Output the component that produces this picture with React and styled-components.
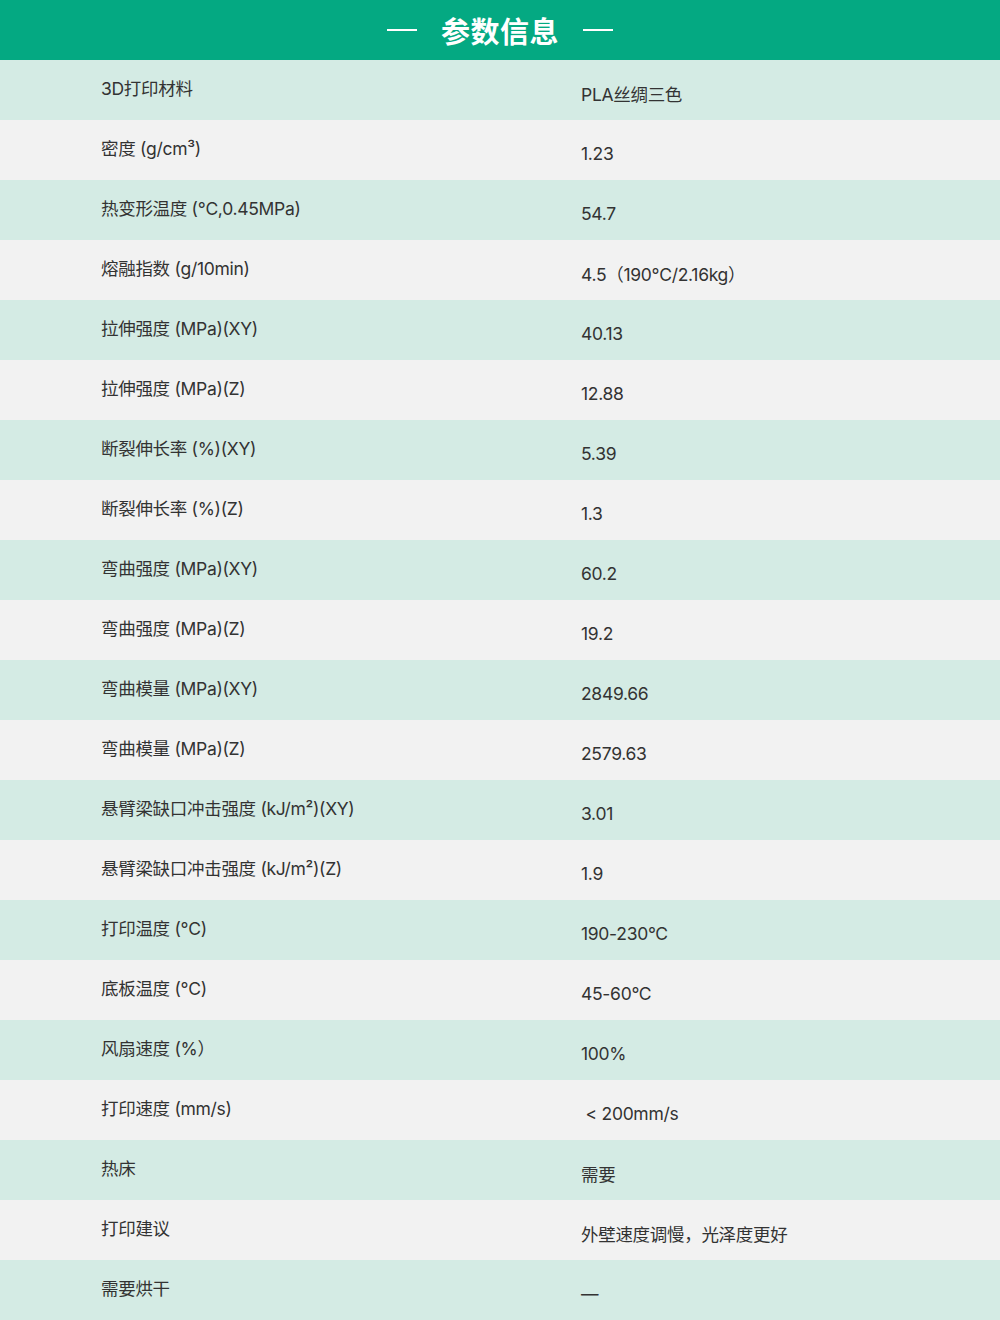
import React from 'react';
import styled, { createGlobalStyle } from 'styled-components';

const rows = [
  ['3D打印材料', 'PLA丝绸三色'],
  ['密度 (g/cm³)', '1.23'],
  ['热变形温度 (°C,0.45MPa)', '54.7'],
  ['熔融指数 (g/10min)', '4.5（190°C/2.16kg）'],
  ['拉伸强度 (MPa)(XY)', '40.13'],
  ['拉伸强度 (MPa)(Z)', '12.88'],
  ['断裂伸长率 (%)(XY)', '5.39'],
  ['断裂伸长率 (%)(Z)', '1.3'],
  ['弯曲强度 (MPa)(XY)', '60.2'],
  ['弯曲强度 (MPa)(Z)', '19.2'],
  ['弯曲模量 (MPa)(XY)', '2849.66'],
  ['弯曲模量 (MPa)(Z)', '2579.63'],
  ['悬臂梁缺口冲击强度 (kJ/m²)(XY)', '3.01'],
  ['悬臂梁缺口冲击强度 (kJ/m²)(Z)', '1.9'],
  ['打印温度 (°C)', '190-230°C'],
  ['底板温度 (°C)', '45-60°C'],
  ['风扇速度 (%）', '100%'],
  ['打印速度 (mm/s)', ' < 200mm/s'],
  ['热床', '需要'],
  ['打印建议', '外壁速度调慢，光泽度更好'],
  ['需要烘干', '—'],
];

export default function App() {
  return (
    <>
      <GlobalStyle />
      <Page>
        <Header>
          <Dash />
          <Title>参数信息</Title>
          <Dash />
        </Header>
        {rows.map(([label, value], i) => (
          <Row key={label} $alt={i % 2 === 1}>
            <Label>{label}</Label>
            <Value>{value}</Value>
          </Row>
        ))}
      </Page>
    </>
  );
}

const GlobalStyle = createGlobalStyle`
  body {
    margin: 0;
    font-family: Inter, "Noto Sans CJK SC", sans-serif;
    color: #333;
  }
`;

const Page = styled.div`
  width: 1000px;
  display: flex;
  flex-direction: column;
`;

const Header = styled.div`
  height: 60px;
  background: #04a982;
  display: flex;
  align-items: center;
  justify-content: center;
  gap: 24px;
`;

const Dash = styled.span`
  width: 30px;
  height: 2px;
  background: #fff;
`;

const Title = styled.h2`
  margin: 0;
  color: #fff;
  font-family: "Noto Sans CJK SC", sans-serif;
  font-size: 29px;
  font-weight: 700;
  letter-spacing: 0.5px;
  line-height: 1;
`;

const Row = styled.div`
  height: 60px;
  display: flex;
  align-items: center;
  background: ${(p) => (p.$alt ? '#f2f2f2' : '#d4ebe4')};
  font-size: 17.5px;
  letter-spacing: -0.3px;
`;

const Label = styled.div`
  width: 581px;
  padding-left: 101px;
  padding-bottom: 5px;
  box-sizing: border-box;
`;

const Value = styled.div`
  padding-top: 6px;
  white-space: pre;
`;
